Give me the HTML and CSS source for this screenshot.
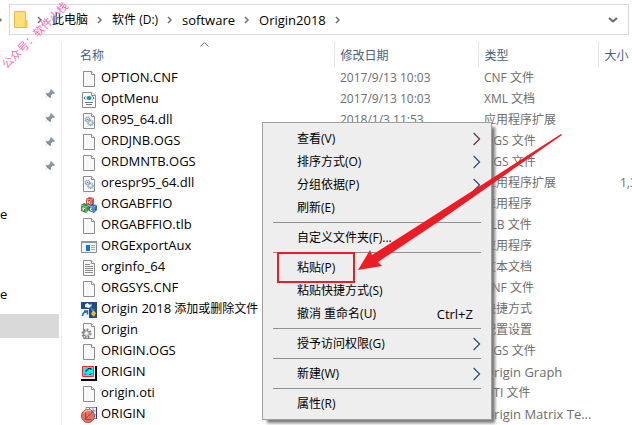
FILE: index.html
```html
<!DOCTYPE html>
<html lang="zh-CN">
<head>
<meta charset="utf-8">
<title>Origin2018</title>
<link rel="stylesheet" href="styles.css">
</head>
<body>
<svg class="defs" aria-hidden="true">
  <symbol id="page" viewBox="0 0 16 16"><path d="M2.500.5h8l3 3v12h-11z" fill="#f8f9f8" stroke="#8d8d8d"/><path d="M10.500.5v3h3" fill="#fff" stroke="#8d8d8d"/></symbol>
  <symbol id="xml" viewBox="0 0 16 16"><path d="M1.500.5h9l4 3v12h-13z" fill="#f8f9f8" stroke="#8d8d8d"/><path d="M10.500.5v3h4" fill="#fff" stroke="#8d8d8d"/><ellipse cx="8" cy="6" rx="2.600" ry="2" fill="#1795a0"/><path d="M4.500 4.500 3 6l1.500 1.500M11.500 4.500 13 6l-1.500 1.500" fill="none" stroke="#4a626b"/><path d="M4 10.500h8M5 12.500h6" stroke="#777"/></symbol>
  <symbol id="dll" viewBox="0 0 16 16"><use href="#page"/><circle cx="6.500" cy="6.500" r="2.200" fill="#e7eef2" stroke="#8299a5" stroke-dasharray="1 .6" stroke-width="1.500"/><circle cx="9.500" cy="9.800" r="2.500" fill="#c9e3f2" stroke="#7599ad" stroke-dasharray="1 .6" stroke-width="1.500"/><circle cx="6.500" cy="6.500" r=".8" fill="#6f7f87"/><circle cx="9.500" cy="9.800" r=".8" fill="#fff"/></symbol>
  <symbol id="blocks" viewBox="0 0 16 16"><path d="m5 2 3-2 5 1v6l-3 2-5-1z" fill="#d8453e"/><path d="m5 2 5 1 3-2M10 3v5" fill="none" stroke="#f29a91"/><path d="m0 8 3-2 5 2v5l-3 3-5-2z" fill="#3e8d42"/><path d="m0 8 5 2 3-2M5 10v5" fill="none" stroke="#8fc981"/><path d="m8 9 3-2 5 1v5l-3 3-5-2z" fill="#2866b7"/><path d="m8 9 5 1 3-2M13 10v5" fill="none" stroke="#85b2e2"/><path d="M6.500 3.500v3M8.500 4v3M6.500 5l2 .5M2 10.500v3M2 11l2 .5M2 12.500l1 .3M11.500 11l-2 .2v2l2 .5" fill="none" stroke="#fff"/></symbol>
  <symbol id="app" viewBox="0 0 16 16"><path d="M.5 2.500h15v11H.5z" fill="#f2f2f2" stroke="#8a9095"/><path d="M0 2h16v2H0z" fill="#8e979d"/><path d="M5 6h4v6H5z" fill="#0878d8"/><path d="M10 6.500h4M10 8.500h4M10 10.500h4" stroke="#aaa"/></symbol>
  <symbol id="text" viewBox="0 0 16 16"><use href="#page"/><path d="M4 4.500h5M4 6.500h8M4 8.500h8M4 10.500h8M4 12.500h8" stroke="#8d8d8d"/></symbol>
  <symbol id="setup" viewBox="0 0 16 16"><path d="M0 0h16v16H0z" fill="#1d4d83"/><path d="M4 5V2.500L6.500 1 9 3l1.500-1.500V4L8 6z" fill="#e9f3fa"/><path d="m9 4 3 3 2 .5-1 1.500-3-1z" fill="#3d82bd"/><path d="m12 8 3 3-2 4-3-3z" fill="#f4b72a"/><path d="M0 7h8v9H0z" fill="#edf3f8"/><path d="M1.500 14c0-3 1-4 4-4M3 9h3.500v3.500" fill="none" stroke="#2567ad" stroke-width="1.500"/></symbol>
  <symbol id="config" viewBox="0 0 16 16"><use href="#page"/><circle cx="5.500" cy="10.500" r="4" fill="none" stroke="#777" stroke-width="2" stroke-dasharray="1.700 1.400"/><circle cx="5.500" cy="10.500" r="2.800" fill="#ddd" stroke="#888"/><circle cx="5.500" cy="10.500" r="1" fill="#fff"/></symbol>
  <symbol id="graph" viewBox="0 0 16 16"><path d="M1 14h13V1h2v15H0v-2z" fill="#000"/><path d="M1.500 1.500h11v10h-11z" fill="#00f5f5" stroke="#f22"/><path d="M1 12.500h12.500V1" fill="none" stroke="#fff"/><path d="M5 7V5h2V3.500h3V5M8 9.500h2V8" fill="none" stroke="#222"/><path d="M3 9.500h2V8" fill="none" stroke="#814eff"/></symbol>
  <symbol id="matrix" viewBox="0 0 16 16"><path d="M5 .5h10.500v11H5zM5 4h10M5 8h10M8.500 0v12M12 0v12" fill="#fff" stroke="#6f8edb"/><path d="M15.500 0v12" stroke="#2639a5"/><circle cx="7" cy="9" r="6.500" fill="#e97162" stroke="#c24435"/><path d="M3 6a5 5 0 0 1 7-2" fill="none" stroke="#ffb1a0" stroke-width="1.500"/><path d="M4.500 5.500v7h6M5 12l2-3 2-1 3-4" fill="none" stroke="#7a4a76"/></symbol>
  <symbol id="pin" viewBox="0 0 12 12"><path d="m7 1 4 4-1 .7-1-.2-2 2v2l-1 .8-2.500-2.500L.5 11.500l2.700-4L1.700 6l.8-1h2l2-2-.2-1z" fill="#87939d"/></symbol>
  <symbol id="next" viewBox="0 0 6 8"><path d="m1 1 3 3-3 3" fill="none" stroke="#747474" stroke-width="1.500"/></symbol>
  <symbol id="sub" viewBox="0 0 8 14"><path d="m.6 1 6 6-6 6" fill="none" stroke="currentColor" stroke-width="1.200"/></symbol>
</svg>

<header class="topbar">
  <svg class="edge"><use href="#next"/></svg>
  <nav class="address" aria-label="路径">
    <svg class="folder" viewBox="0 0 14 17"><path d="M.5.5h11v9h1.500v7H.5z" fill="#ffdf78" stroke="#e5bb43"/><path d="M10.500 16V10h2v6z" fill="#f4c950"/></svg>
    <svg class="next"><use href="#next"/></svg>
    <a href="#">此电脑</a>
    <svg class="next"><use href="#next"/></svg>
    <a href="#">软件 (D:)</a>
    <svg class="next"><use href="#next"/></svg>
    <a class="latin" href="#">software</a>
    <svg class="next"><use href="#next"/></svg>
    <a class="latin" href="#">Origin2018</a>
    <svg class="next"><use href="#next"/></svg>
    <button class="history" aria-label="历史记录"><svg viewBox="0 0 10 6"><path d="m1 1 4 3.500L9 1" fill="none" stroke="#666" stroke-width="2"/></svg></button>
  </nav>
</header>

<main class="content">
  <aside class="sidebar">
    <div class="side-row"><svg><use href="#pin"/></svg></div>
    <div class="side-row"><svg><use href="#pin"/></svg></div>
    <div class="side-row"><svg><use href="#pin"/></svg></div>
    <div class="side-row"><svg><use href="#pin"/></svg></div>
    <div class="side-row"></div>
    <div class="side-row latin">e</div>
    <div class="side-row later latin">e</div>
    <div class="side-row selected"></div>
  </aside>
  <section class="listing">
    <table>
      <colgroup><col class="c-name"><col class="c-date"><col class="c-type"><col></colgroup>
      <thead><tr><th>名称<svg class="sort" viewBox="0 0 9 5"><path d="m.5 4.500 4-4 4 4" fill="none" stroke="#666"/></svg></th><th>修改日期</th><th>类型</th><th>大小</th></tr></thead>
      <tbody>
        <tr><td><svg><use href="#page"/></svg><span class="latin">OPTION.CNF</span></td><td>2017/9/13 10:03</td><td>CNF 文件</td><td></td></tr>
        <tr><td><svg><use href="#xml"/></svg><span class="latin">OptMenu</span></td><td>2017/9/13 10:03</td><td>XML 文档</td><td></td></tr>
        <tr><td><svg><use href="#dll"/></svg><span class="latin">OR95_64.dll</span></td><td>2018/1/3 11:53</td><td>应用程序扩展</td><td></td></tr>
        <tr><td><svg><use href="#page"/></svg><span class="latin">ORDJNB.OGS</span></td><td></td><td>OGS 文件</td><td></td></tr>
        <tr><td><svg><use href="#page"/></svg><span class="latin">ORDMNTB.OGS</span></td><td></td><td>OGS 文件</td><td></td></tr>
        <tr><td><svg><use href="#dll"/></svg><span class="latin">orespr95_64.dll</span></td><td></td><td>应用程序扩展</td><td>1,3</td></tr>
        <tr><td><svg><use href="#blocks"/></svg><span class="latin">ORGABFFIO</span></td><td></td><td>应用程序</td><td></td></tr>
        <tr><td><svg><use href="#page"/></svg><span class="latin">ORGABFFIO.tlb</span></td><td></td><td>TLB 文件</td><td></td></tr>
        <tr><td><svg><use href="#app"/></svg><span class="latin">ORGExportAux</span></td><td></td><td>应用程序</td><td></td></tr>
        <tr><td><svg><use href="#text"/></svg><span class="latin">orginfo_64</span></td><td></td><td>文本文档</td><td></td></tr>
        <tr><td><svg><use href="#page"/></svg><span class="latin">ORGSYS.CNF</span></td><td></td><td>CNF 文件</td><td></td></tr>
        <tr><td><svg><use href="#setup"/></svg><span class="latin">Origin 2018</span> 添加或删除文件</td><td></td><td>快捷方式</td><td></td></tr>
        <tr><td><svg><use href="#config"/></svg><span class="latin">Origin</span></td><td></td><td>配置设置</td><td></td></tr>
        <tr><td><svg><use href="#page"/></svg><span class="latin">ORIGIN.OGS</span></td><td></td><td>OGS 文件</td><td></td></tr>
        <tr><td><svg><use href="#graph"/></svg><span class="latin">ORIGIN</span></td><td></td><td class="latin">Origin Graph</td><td></td></tr>
        <tr><td><svg><use href="#page"/></svg><span class="latin">origin.oti</span></td><td></td><td>OTI 文件</td><td></td></tr>
        <tr><td><svg><use href="#matrix"/></svg><span class="latin">ORIGIN</span></td><td></td><td class="latin">Origin Matrix Te...</td><td></td></tr>
      </tbody>
    </table>
  </section>
</main>

<div class="menu" role="menu">
  <button role="menuitem">查看(V)<svg class="warm"><use href="#sub"/></svg></button>
  <button role="menuitem">排序方式(O)<svg><use href="#sub"/></svg></button>
  <button role="menuitem">分组依据(P)<svg><use href="#sub"/></svg></button>
  <button role="menuitem">刷新(E)</button>
  <hr>
  <button role="menuitem">自定义文件夹(F)...</button>
  <hr>
  <button role="menuitem">粘贴(P)</button>
  <button role="menuitem">粘贴快捷方式(S)</button>
  <button role="menuitem">撤消 重命名(U)<kbd class="latin">Ctrl+Z</kbd></button>
  <hr>
  <button role="menuitem">授予访问权限(G)<svg><use href="#sub"/></svg></button>
  <hr>
  <button role="menuitem">新建(W)<svg><use href="#sub"/></svg></button>
  <hr>
  <button role="menuitem">属性(R)</button>
</div>

<div class="highlight"></div>
<svg class="arrow" viewBox="0 0 206 138"><path d="M1 136 13 116 15 121 70 86 204 0 205 1 78 90 21 128 25 132z" fill="#ed1c24"/></svg>
<div class="watermark">公众号：软件小栈</div>
</body>
</html>
```

FILE: styles.css
```css
* { box-sizing: border-box; }

body {
  margin: 0;
  min-height: 100vh;
  overflow: hidden;
  position: relative;
  background: #fff;
  color: #000;
  font: 12px/20px "Open Sans", "Noto Sans CJK SC", sans-serif;
}

html { overflow: hidden; }
.latin { font-size: 13px; }
.defs { position: absolute; width: 0; height: 0; }
button, kbd { font-family: inherit; }

.topbar {
  display: flex;
  align-items: center;
  padding-top: 4px;
  margin-right: 3px;
}
.edge { width: 6px; height: 8px; margin: 0 6px 0 -3px; }
.address {
  flex: 1;
  display: flex;
  align-items: center;
  height: 31px;
  padding: 0 10px 0 4px;
  border: 1px solid #d9d9d9;
  white-space: nowrap;
}
.address a { color: #000; text-decoration: none; }
.folder { width: 14px; height: 17px; }
.next { width: 6px; height: 8px; margin: 0 9px; flex: none; }
.history {
  margin-left: auto;
  padding: 0;
  width: 10px;
  height: 20px;
  border: 0;
  background: none;
}
.history svg { display: block; width: 10px; height: 6px; }

.content { display: flex; height: calc(100vh - 35px); overflow: hidden; }
.sidebar {
  flex: none;
  width: 62px;
  margin-top: 7px;
  padding: 40px 2px 0 0;
  border-right: 1px solid #efefef;
}
.side-row { display: flex; align-items: center; height: 24px; }
.side-row svg { width: 12px; height: 12px; margin-left: 44px; }
.later { margin-top: 56px; }
.selected { margin-top: 8px; background: #d9d9d9; }

.listing { flex: 1; min-width: 0; padding-top: 7px; overflow: hidden; }
table { width: 100%; table-layout: fixed; border-collapse: collapse; white-space: nowrap; }
.c-name { width: 272px; }
.c-date { width: 144px; }
.c-type { width: 120px; }
th {
  position: relative;
  height: 25px;
  padding: 3px 0 0 6px;
  border-right: 1px solid #e3e3e3;
  color: #4c607a;
  font-weight: 400;
  text-align: left;
}
th:first-child { padding-left: 18px; }
th:last-child { border: 0; }
.sort { position: absolute; top: 0; left: 138px; width: 9px; height: 5px; }
td { height: 21px; padding: 0 0 0 6px; color: #6d6d6d; }
td:first-child { padding-left: 19px; color: #000; }
td:last-child { padding-left: 22px; }
td svg { width: 16px; height: 16px; margin-right: 4px; vertical-align: middle; }

.menu {
  position: absolute;
  left: 262px;
  top: 122px;
  width: 230px;
  padding: 4px 1px;
  border: 1px solid #a0a0a0;
  background: #eee;
  box-shadow: 4px 4px 3px -1px #777;
}
.menu button {
  display: flex;
  align-items: center;
  width: 100%;
  height: 23px;
  padding: 0 9px 0 33px;
  border: 0;
  background: none;
  color: #000;
  font-size: 12px;
  line-height: 20px;
  white-space: nowrap;
}
.menu svg { width: 8px; height: 14px; margin-left: auto; color: #245078; }
.menu .warm { color: #622f42; }
.menu kbd { margin: 0 8px 0 auto; }
.menu hr { height: 1px; margin: 3px 9px; border: 0; background: #919191; }

.highlight {
  position: absolute;
  left: 277px;
  top: 252px;
  width: 78px;
  height: 31px;
  border: 2px solid #ed1c24;
}
.arrow { position: absolute; left: 357px; top: 134px; width: 206px; height: 138px; }
.watermark {
  position: absolute;
  left: -9px;
  top: 25px;
  color: #ff69b4;
  font-size: 11px;
  white-space: nowrap;
  transform: rotate(-45deg);
}
```
